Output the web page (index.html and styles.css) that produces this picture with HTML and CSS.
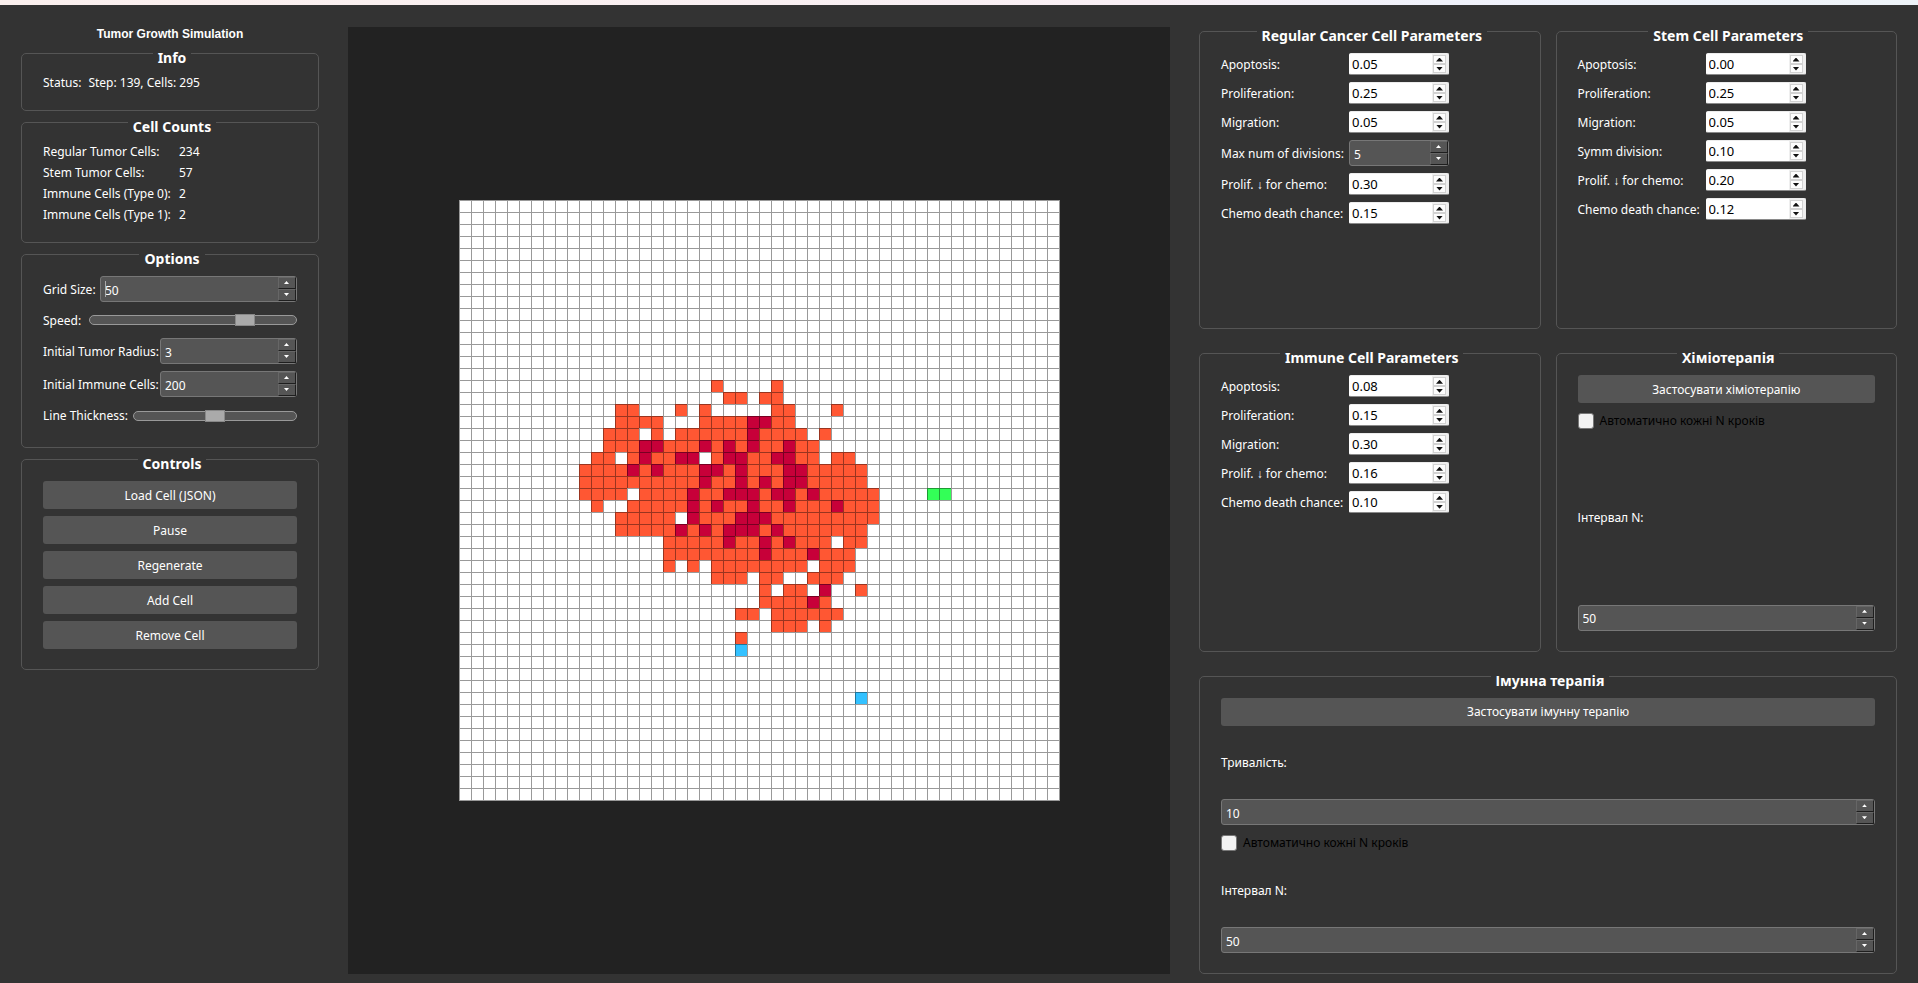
FILE: index.html
```html
<!DOCTYPE html>
<html lang="en">
<head>
<meta charset="utf-8">
<title>Tumor Growth Simulation</title>
<link rel="stylesheet" href="styles.css">
</head>
<body>
<div class="strip"></div>
<main class="window">
  <aside class="side">
    <h1 class="title">Tumor Growth Simulation</h1>

    <section class="group">
      <h2 class="caption">Info</h2>
      <p class="status"><span>Status:</span><span>Step: 139, Cells: 295</span></p>
    </section>

    <section class="group">
      <h2 class="caption">Cell Counts</h2>
      <dl class="counts">
        <dt>Regular Tumor Cells:</dt><dd>234</dd>
        <dt>Stem Tumor Cells:</dt><dd>57</dd>
        <dt>Immune Cells (Type 0):</dt><dd>2</dd>
        <dt>Immune Cells (Type 1):</dt><dd>2</dd>
      </dl>
    </section>

    <section class="group">
      <h2 class="caption">Options</h2>
      <div class="options">
        <div class="option option-grid">
          <label for="grid-size">Grid Size:</label>
          <div class="spin"><span class="caret"></span><input id="grid-size" type="number" value="50"><button class="up" aria-label="Increase"></button><button class="down" aria-label="Decrease"></button></div>
        </div>
        <div class="option option-speed">
          <label for="speed">Speed:</label>
          <input class="slider" id="speed" type="range" min="0" max="100" value="78">
        </div>
        <div class="option option-wide">
          <label for="radius">Initial Tumor Radius:</label>
          <div class="spin"><input id="radius" type="number" value="3"><button class="up" aria-label="Increase"></button><button class="down" aria-label="Decrease"></button></div>
        </div>
        <div class="option option-wide">
          <label for="immune">Initial Immune Cells:</label>
          <div class="spin"><input id="immune" type="number" value="200"><button class="up" aria-label="Increase"></button><button class="down" aria-label="Decrease"></button></div>
        </div>
        <div class="option option-line">
          <label for="thickness">Line Thickness:</label>
          <input class="slider" id="thickness" type="range" min="0" max="100" value="50">
        </div>
      </div>
    </section>

    <section class="group">
      <h2 class="caption">Controls</h2>
      <div class="actions">
        <button class="button">Load Cell (JSON)</button>
        <button class="button">Pause</button>
        <button class="button">Regenerate</button>
        <button class="button">Add Cell</button>
        <button class="button">Remove Cell</button>
      </div>
    </section>
  </aside>

  <div class="canvas">
    <svg class="board" viewBox="0 0 601 601" width="601" height="601" role="img" aria-label="Cell grid">
      <defs>
        <pattern id="lines" width="12" height="12" patternUnits="userSpaceOnUse">
          <path d="M0 0h12v1H1v11H0z" fill="#000" fill-opacity=".4"/>
        </pattern>
      </defs>
      <rect width="601" height="601" fill="#fff"/>
      <g transform="scale(12)" stroke-width="1" fill="none" shape-rendering="crispEdges">
        <g transform="translate(10 .5)">
          <path stroke="#ff5733" d="M11 15h1M16 15h1
            M12 16h2M15 16h2
            M3 17h2M8 17h1M10 17h1M16 17h2M21 17h1
            M3 18h4M10 18h8
            M2 19h3M6 19h1M8 19h11M20 19h1
            M2 20h18
            M1 21h2M4 21h6M11 21h9M21 21h2
            M0 22h24
            M0 23h24
            M0 24h4M5 24h20
            M1 25h1M4 25h21
            M3 26h5M9 26h16
            M3 27h21
            M7 28h14M22 28h2
            M7 29h16
            M7 30h1M9 30h1M11 30h8M20 30h3
            M11 31h3M15 31h2M19 31h3
            M15 32h1M17 32h2M23 32h1
            M15 33h6
            M13 34h2M16 34h6
            M16 35h3M20 35h1
            M13 36h1"/>
          <path stroke="#c70039" d="M14 18h2
            M14 19h1
            M5 20h2M10 20h1M12 20h1M14 20h1M17 20h1
            M5 21h1M8 21h2M12 21h2M16 21h2
            M4 22h1M6 22h1M10 22h2M13 22h1M17 22h2
            M10 23h1M13 23h1M15 23h1M17 23h2
            M9 24h1M12 24h3M16 24h2M19 24h1
            M9 25h1M11 25h1M14 25h1M17 25h1M21 25h1
            M9 26h1M13 26h3
            M8 27h1M10 27h1M12 27h3M16 27h1
            M12 28h1M15 28h1M17 28h1
            M15 29h1M19 29h1
            M20 32h1
            M19 33h1"/>
          <path stroke="#33ff57" d="M29 24h2"/>
          <path stroke="#33c1ff" d="M13 37h1M23 41h1"/>
        </g>
      </g>
      <rect width="601" height="601" fill="url(#lines)"/>
    </svg>
  </div>

  <div class="params">
    <section class="group">
      <h2 class="caption">Regular Cancer Cell Parameters</h2>
      <div class="form">
        <label for="r1">Apoptosis:</label>
        <div class="spin light"><input id="r1" type="number" step="0.01" value="0.05"><button class="up" aria-label="Increase"></button><button class="down" aria-label="Decrease"></button></div>
        <label for="r2">Proliferation:</label>
        <div class="spin light"><input id="r2" type="number" step="0.01" value="0.25"><button class="up" aria-label="Increase"></button><button class="down" aria-label="Decrease"></button></div>
        <label for="r3">Migration:</label>
        <div class="spin light"><input id="r3" type="number" step="0.01" value="0.05"><button class="up" aria-label="Increase"></button><button class="down" aria-label="Decrease"></button></div>
        <label for="r4">Max num of divisions:</label>
        <div class="spin"><input id="r4" type="number" value="5"><button class="up" aria-label="Increase"></button><button class="down" aria-label="Decrease"></button></div>
        <label for="r5">Prolif. ↓ for chemo:</label>
        <div class="spin light"><input id="r5" type="number" step="0.01" value="0.30"><button class="up" aria-label="Increase"></button><button class="down" aria-label="Decrease"></button></div>
        <label for="r6">Chemo death chance:</label>
        <div class="spin light"><input id="r6" type="number" step="0.01" value="0.15"><button class="up" aria-label="Increase"></button><button class="down" aria-label="Decrease"></button></div>
      </div>
    </section>

    <section class="group">
      <h2 class="caption">Stem Cell Parameters</h2>
      <div class="form">
        <label for="s1">Apoptosis:</label>
        <div class="spin light"><input id="s1" type="number" step="0.01" value="0.00"><button class="up" aria-label="Increase"></button><button class="down" aria-label="Decrease"></button></div>
        <label for="s2">Proliferation:</label>
        <div class="spin light"><input id="s2" type="number" step="0.01" value="0.25"><button class="up" aria-label="Increase"></button><button class="down" aria-label="Decrease"></button></div>
        <label for="s3">Migration:</label>
        <div class="spin light"><input id="s3" type="number" step="0.01" value="0.05"><button class="up" aria-label="Increase"></button><button class="down" aria-label="Decrease"></button></div>
        <label for="s4">Symm division:</label>
        <div class="spin light"><input id="s4" type="number" step="0.01" value="0.10"><button class="up" aria-label="Increase"></button><button class="down" aria-label="Decrease"></button></div>
        <label for="s5">Prolif. ↓ for chemo:</label>
        <div class="spin light"><input id="s5" type="number" step="0.01" value="0.20"><button class="up" aria-label="Increase"></button><button class="down" aria-label="Decrease"></button></div>
        <label for="s6">Chemo death chance:</label>
        <div class="spin light"><input id="s6" type="number" step="0.01" value="0.12"><button class="up" aria-label="Increase"></button><button class="down" aria-label="Decrease"></button></div>
      </div>
    </section>

    <section class="group">
      <h2 class="caption">Immune Cell Parameters</h2>
      <div class="form">
        <label for="i1">Apoptosis:</label>
        <div class="spin light"><input id="i1" type="number" step="0.01" value="0.08"><button class="up" aria-label="Increase"></button><button class="down" aria-label="Decrease"></button></div>
        <label for="i2">Proliferation:</label>
        <div class="spin light"><input id="i2" type="number" step="0.01" value="0.15"><button class="up" aria-label="Increase"></button><button class="down" aria-label="Decrease"></button></div>
        <label for="i3">Migration:</label>
        <div class="spin light"><input id="i3" type="number" step="0.01" value="0.30"><button class="up" aria-label="Increase"></button><button class="down" aria-label="Decrease"></button></div>
        <label for="i4">Prolif. ↓ for chemo:</label>
        <div class="spin light"><input id="i4" type="number" step="0.01" value="0.16"><button class="up" aria-label="Increase"></button><button class="down" aria-label="Decrease"></button></div>
        <label for="i5">Chemo death chance:</label>
        <div class="spin light"><input id="i5" type="number" step="0.01" value="0.10"><button class="up" aria-label="Increase"></button><button class="down" aria-label="Decrease"></button></div>
      </div>
    </section>

    <section class="group" lang="uk">
      <h2 class="caption">Хіміотерапія</h2>
      <div class="therapy">
        <button class="button">Застосувати хіміотерапію</button>
        <label class="check"><input type="checkbox">Автоматично кожні N кроків</label>
        <label class="field-label" for="chemo-n">Інтервал N:</label>
        <div class="spin"><input id="chemo-n" type="number" value="50"><button class="up" aria-label="Increase"></button><button class="down" aria-label="Decrease"></button></div>
      </div>
    </section>

    <section class="group group-full" lang="uk">
      <h2 class="caption">Імунна терапія</h2>
      <div class="therapy">
        <button class="button">Застосувати імунну терапію</button>
        <label class="field-label" for="duration">Тривалість:</label>
        <div class="spin"><input id="duration" type="number" value="10"><button class="up" aria-label="Increase"></button><button class="down" aria-label="Decrease"></button></div>
        <label class="check"><input type="checkbox">Автоматично кожні N кроків</label>
        <label class="field-label" for="immune-n">Інтервал N:</label>
        <div class="spin"><input id="immune-n" type="number" value="50"><button class="up" aria-label="Increase"></button><button class="down" aria-label="Decrease"></button></div>
      </div>
    </section>
  </div>
</main>
</body>
</html>
```
FILE: styles.css
```css
* {
  box-sizing: border-box;
}

body {
  margin: 0;
  min-height: 100vh;
  display: flex;
  flex-direction: column;
  background: #333;
  color: #fff;
  font: 12px/15px "Noto Sans", Tahoma, sans-serif;
}

input,
button {
  font: inherit;
  color: inherit;
  margin: 0;
}

.strip {
  height: 5px;
  background: linear-gradient(90deg, #fbf0ee, #f8eff4 60%, #f0f2fb 75%, #eef3f8);
}

.window {
  flex: 1;
  display: grid;
  grid-template-columns: minmax(280px, 298fr) minmax(0, 822fr) minmax(560px, 698fr);
  gap: 29px;
  padding: 22px 21px 9px;
}

/* Group boxes */

.group {
  display: flex;
  flex-direction: column;
  border: 1px solid #555;
  border-radius: 5px;
  padding: 0 21px 20px;
}

.caption {
  align-self: center;
  margin: -5px 0 8px 4px;
  padding: 0 5px;
  background: #333;
  font-size: 14px;
  line-height: 18px;
  font-weight: bold;
}

/* Left column */

.side {
  display: flex;
  flex-direction: column;
  gap: 11px;
}

.title {
  margin: 0;
  text-align: center;
  font: bold 12px/15px "Liberation Sans", Arial, sans-serif;
}

.status {
  display: flex;
  gap: 7px;
  margin: 0;
}

.counts {
  display: grid;
  grid-template-columns: 129px 1fr;
  gap: 6px 7px;
  margin: 0;
  white-space: nowrap;
}

.counts dd {
  margin: 0;
}

.options,
.actions {
  display: flex;
  flex-direction: column;
  gap: 7px;
}

.option {
  display: grid;
  align-items: center;
  gap: 7px;
  min-height: 22px;
  white-space: nowrap;
}

.option-grid {
  grid-template-columns: 50px 1fr;
}

.option-speed {
  grid-template-columns: 39px 1fr;
}

.option-wide {
  grid-template-columns: 110px 1fr;
}

.option-line {
  grid-template-columns: 83px 1fr;
  min-height: 23px;
}

.button {
  height: 28px;
  padding: 0 8px;
  border: 0;
  border-radius: 3px;
  background: #555;
}

/* Spin boxes */

.spin {
  position: relative;
  display: grid;
  grid-template-columns: 1fr 18px;
  grid-template-rows: 12px 12px;
  height: 26px;
  border: 1px solid #777;
  border-radius: 3px;
  background: #555;
}

.spin input {
  grid-row: 1 / 3;
  width: 100%;
  min-width: 0;
  padding: 2px 4px 0;
  border: 0;
  background: none;
  outline: 0;
  appearance: textfield;
  -moz-appearance: textfield;
}

.spin input::-webkit-inner-spin-button {
  appearance: none;
  margin: 0;
}

.caret {
  position: absolute;
  left: 4px;
  top: 4px;
  width: 1px;
  height: 16px;
  background: #aaa;
}

.spin button {
  display: grid;
  place-items: center;
  padding: 0 1px 1px 0;
  border: 1px solid;
  border-color: #666 #1e1e1e #1e1e1e #666;
  background: #555;
}

.spin button::before {
  content: "";
  width: 5px;
  height: 3px;
  background: #fff;
}

.spin .up::before {
  clip-path: polygon(50% 0, 100% 100%, 0 100%);
}

.spin .down::before {
  clip-path: polygon(0 0, 100% 0, 50% 100%);
}

.spin.light {
  grid-template-columns: 1fr 13px;
  grid-template-rows: 9px 9px;
  height: 22px;
  padding: 1px 2px 0 0;
  border-color: #ececec #ececec #8a8a8a #fff;
  border-radius: 2px;
  background: linear-gradient(90deg, #fff, #fff) 0 0 / calc(100% - 16px) 100% no-repeat #efefef;
  color: #000;
}

.spin.light input {
  padding: 0 2px;
  font-size: 13px;
}

.spin.light button {
  padding: 0;
  border-color: #d2d2d2;
  background: #fdfdfd;
}

.spin.light button::before {
  width: 7px;
  height: 4px;
  background: #111;
}

/* Sliders */

.slider {
  width: 100%;
  height: 12px;
  appearance: none;
  -webkit-appearance: none;
  background: none;
}

.slider::-webkit-slider-runnable-track {
  height: 10px;
  border: 1px solid #999;
  border-radius: 5px;
  background: #555;
}

.slider::-webkit-slider-thumb {
  -webkit-appearance: none;
  width: 20px;
  height: 12px;
  margin-top: -2px;
  border: 1px solid #888;
  border-radius: 0;
  background: #aaa;
}

/* Simulation canvas */

.canvas {
  display: flex;
  align-items: center;
  justify-content: center;
  background: #222;
}

.board {
  display: block;
  max-width: 100%;
}

/* Right column */

.params {
  display: grid;
  grid-template-columns: 1fr 1fr;
  grid-template-rows: repeat(3, 1fr);
  gap: 24px 15px;
  padding-top: 4px;
}

.group-full {
  grid-column: 1 / 3;
}

.form {
  display: grid;
  grid-template-columns: 121px 100px;
  gap: 7px;
  align-items: center;
  white-space: nowrap;
}

.therapy {
  flex: 1;
  display: flex;
  flex-direction: column;
  gap: 7px;
}

.field-label {
  flex: 1;
  display: flex;
  align-items: center;
}

.check {
  display: flex;
  align-items: center;
  gap: 6px;
  height: 21px;
  color: #000;
}

.check input {
  width: 16px;
  height: 16px;
  border: 1px solid #777;
  border-radius: 3px;
  background: #f3f3f3;
  appearance: none;
}
```
